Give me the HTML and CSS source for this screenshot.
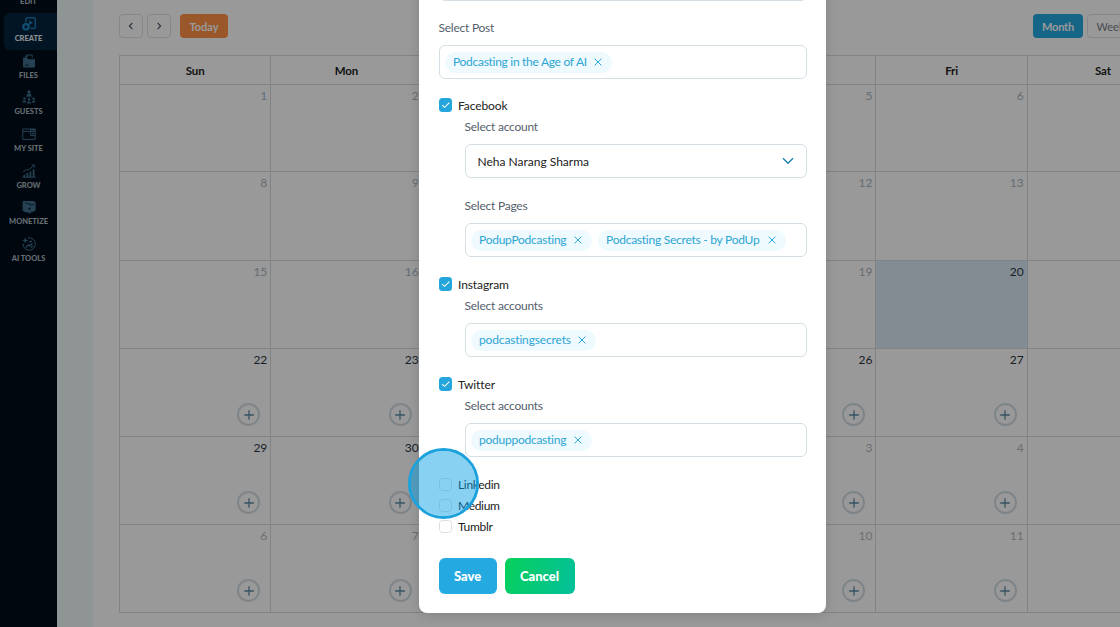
FILE: index.html
```html
<!DOCTYPE html>
<html lang="en">
<head>
  <meta charset="UTF-8">
  <meta name="viewport" content="width=device-width, initial-scale=1.0">
  <title>Create Post</title>
  <link rel="stylesheet" href="styles.css">
</head>
<body>
  <div class="app">
    <nav class="sidebar">
      <a class="nav-item">
        <svg viewBox="0 0 14 14"></svg>
        <span>EDIT</span>
      </a>
      <a class="nav-item active">
        <svg viewBox="0 0 14 14" fill="none" stroke="currentColor" stroke-width="1.2">
          <path d="M4 5.5V1.6Q4 .8 4.8.8H12.4Q13.2.8 13.2 1.6V10.6Q13.2 11.4 12.4 11.4H8.6"/>
          <path d="M7.2 3.6L10.8 5.8L7.2 8Z" fill="currentColor" stroke="none"/>
          <circle cx="4" cy="9.8" r="3.8" fill="currentColor" stroke="none"/>
          <path d="M4 7.8V11.8M2 9.8H6" stroke="#03243f"/>
        </svg>
        <span>CREATE</span>
      </a>
      <a class="nav-item">
        <svg viewBox="0 0 14 14" fill="currentColor">
          <path d="M3 4.4V2.6L5 .6H10.6V4.4H9.8V1.4H5.6V3.2H3.8V4.4Z"/>
          <path d="M1 3.8H5L6.4 5.2H13V12.4Q13 13.4 12 13.4H2Q1 13.4 1 12.4Z"/>
          <path d="M3 11.2H6.4" stroke="#000d18" stroke-width=".9"/>
        </svg>
        <span>FILES</span>
      </a>
      <a class="nav-item">
        <svg viewBox="0 0 14 14" fill="currentColor">
          <circle cx="7" cy="1.8" r="1.6"/>
          <path d="M4.8 6.4V4.8Q4.8 3.6 7 3.6Q9.2 3.6 9.2 4.8V6.4Z"/>
          <circle cx="2.4" cy="8.8" r="1.2"/>
          <circle cx="11.6" cy="8.8" r="1.2"/>
          <circle cx="7" cy="9.6" r="1.3"/>
          <path d="M.4 12.4Q.4 10.4 2.4 10.4T4.4 12.4ZM9.6 12.4Q9.6 10.4 11.6 10.4T13.6 12.4ZM4.8 13.6Q4.8 11.4 7 11.4T9.2 13.6Z"/>
          <path d="M7 6V8.6M3.4 7.6L5 6.4M10.6 7.6L9 6.4" stroke="currentColor" stroke-width=".7"/>
        </svg>
        <span>GUESTS</span>
      </a>
      <a class="nav-item">
        <svg viewBox="0 0 14 14" fill="none" stroke="currentColor" stroke-width="1">
          <path d="M.8 2H13.2V12.4H.8ZM.8 4.6H13.2M8.4 2V4.6M8.6 4.6V8.6H13.2"/>
          <path d="M9 2.8H13M9.8 6.6H12.4" stroke-width="1.4"/>
        </svg>
        <span>MY SITE</span>
      </a>
      <a class="nav-item">
        <svg viewBox="0 0 14 14" fill="none" stroke="currentColor" stroke-width="1">
          <path d="M.4 13.2H13.6M1 7.6L4.6 5.6L6.8 5.8L12 1.4M9.6 1H12.4V3.6"/>
          <path d="M2.4 13V10.8M5.4 13V9M8.4 13V7.6M11.6 13V5.4" stroke-width="1.8"/>
        </svg>
        <span>GROW</span>
      </a>
      <a class="nav-item">
        <svg viewBox="0 0 14 14" fill="currentColor">
          <path d="M.6 2.2Q.6 1 1.8 1H12.4V2.8H13.4V10.6L9.4 12.6V4.8L4 2.6L8.8 5.2V13.4L1.6 11.4Q.6 11 .6 10Z"/>
          <path d="M4 2.2H13.4V10.6L8.8 12V5.2Z"/>
          <circle cx="7.2" cy="8.6" r=".9" fill="#000d18"/>
          <path d="M3.4 2.8L9.2 4.8H12" fill="none" stroke="#000d18" stroke-width=".7"/>
        </svg>
        <span>MONETIZE</span>
      </a>
      <a class="nav-item">
        <svg viewBox="0 0 14 14" fill="none" stroke="currentColor" stroke-width="1">
          <path d="M6 .9A6.2 6.2 0 1 1 1 6.6"/>
          <path d="M3.2 .4L4 2.6L6.2 3.4L4 4.2L3.2 6.4L2.4 4.2L.2 3.4L2.4 2.6Z" fill="currentColor" stroke="none"/>
          <path d="M3.8 10.6L6.6 7.6L8 9L10.4 6.4M7.4 5.2L10 4.2M9 10.6L11 9" stroke-width="1.3"/>
        </svg>
        <span>AI TOOLS</span>
      </a>
    </nav>
    <div class="strip"></div>

    <main class="main">
      <div class="toolbar">
        <button class="btn-icon"><svg viewBox="0 0 10 10"><path d="M6.4 1.8L3.4 5L6.4 8.2"/></svg></button>
        <button class="btn-icon"><svg viewBox="0 0 10 10"><path d="M3.6 1.8L6.6 5L3.6 8.2"/></svg></button>
        <button class="btn-today">Today</button>
        <div class="views">
          <button class="btn-view selected">Month</button>
          <button class="btn-view">Week</button>
          <button class="btn-view">Day</button>
        </div>
      </div>
      <div class="calendar" id="calendar"></div>
    </main>
  </div>

  <div class="overlay">
    <div class="modal">
      <div class="field"></div>

      <label class="label">Select Post</label>
      <div class="field">
        <span class="tag t-post">Podcasting in the Age of AI <svg viewBox="0 0 8 8"><path d="M.6.6L7.4 7.4M7.4.6L.6 7.4"/></svg></span>
      </div>

      <div class="check-row first">
        <span class="checkbox checked"><svg viewBox="0 0 13 13"><path d="M3 6.8L5.4 9L10 4.4"/></svg></span>
        <span>Facebook</span>
      </div>
      <div class="sub">
        <label class="label">Select account</label>
        <div class="field select">
          <span>Neha Narang Sharma</span>
          <svg viewBox="0 0 12 8"><path d="M1 1.2L6 6.2L11 1.2"/></svg>
        </div>
        <label class="label pages">Select Pages</label>
        <div class="field">
          <span class="tag t-page">PodupPodcasting <svg viewBox="0 0 8 8"><path d="M.6.6L7.4 7.4M7.4.6L.6 7.4"/></svg></span>
          <span class="tag t-secrets">Podcasting Secrets - by PodUp <svg viewBox="0 0 8 8"><path d="M.6.6L7.4 7.4M7.4.6L.6 7.4"/></svg></span>
        </div>
      </div>

      <div class="check-row">
        <span class="checkbox checked"><svg viewBox="0 0 13 13"><path d="M3 6.8L5.4 9L10 4.4"/></svg></span>
        <span>Instagram</span>
      </div>
      <div class="sub">
        <label class="label">Select accounts</label>
        <div class="field">
          <span class="tag t-insta">podcastingsecrets <svg viewBox="0 0 8 8"><path d="M.6.6L7.4 7.4M7.4.6L.6 7.4"/></svg></span>
        </div>
      </div>

      <div class="check-row">
        <span class="checkbox checked"><svg viewBox="0 0 13 13"><path d="M3 6.8L5.4 9L10 4.4"/></svg></span>
        <span>Twitter</span>
      </div>
      <div class="sub">
        <label class="label">Select accounts</label>
        <div class="field">
          <span class="tag t-page">poduppodcasting <svg viewBox="0 0 8 8"><path d="M.6.6L7.4 7.4M7.4.6L.6 7.4"/></svg></span>
        </div>
      </div>

      <div class="more">
        <div class="check-row"><span class="checkbox"></span><span>Linkedin</span></div>
        <div class="check-row"><span class="checkbox"></span><span>Medium</span></div>
        <div class="check-row"><span class="checkbox"></span><span>Tumblr</span></div>
      </div>

      <div class="actions">
        <button class="btn-save">Save</button>
        <button class="btn-cancel">Cancel</button>
      </div>
    </div>
  </div>

  <div class="click-marker"></div>

  <script>
    const calendar = document.getElementById('calendar');
    const today = 20;
    let html = '';

    ['Sun', 'Mon', 'Tue', 'Wed', 'Thu', 'Fri', 'Sat'].forEach(day => {
      html += `<div class="day-name">${day}</div>`;
    });

    // 6 weeks, the month has 30 days
    for (let i = 1; i <= 42; i++) {
      const date = i > 30 ? i - 30 : i;
      let cls = 'day';
      if (i < today) cls += ' past';
      if (i > 30) cls += ' next';
      if (i === today) cls += ' today';
      const add = i > 21 ? '<span class="add"><svg viewBox="0 0 10 10"><path d="M5 .2V9.8M.2 5H9.8"/></svg></span>' : '';
      html += `<div class="${cls}"><span>${date}</span>${add}</div>`;
    }
    calendar.innerHTML = html;
  </script>
</body>
</html>
```
FILE: styles.css
```css
* {
  box-sizing: border-box;
}

body {
  margin: 0;
  height: 627px;
  overflow: hidden;
  font-family: Lato, "Liberation Sans", sans-serif;
  font-size: 12px;
  color: #222;
  background-color: #fff;
}

button {
  font-family: inherit;
  padding: 0;
  border: none;
}

.app {
  display: flex;
  height: 627px;
  overflow: hidden;
}

/* Sidebar */
.sidebar {
  flex: none;
  width: 57px;
  height: 627px;
  padding-left: 4px;
  background-color: #000d18;
  overflow: hidden;
}

.nav-item {
  display: flex;
  flex-direction: column;
  align-items: center;
  height: 36.7px;
  padding: 4px 4px 0 0;
  border-radius: 6px 0 0 6px;
  color: #3f6d8c;
}

.nav-item:first-child {
  margin-top: -23.7px;
}

.nav-item svg {
  flex: none;
  width: 14px;
  height: 14px;
}

.nav-item span {
  margin-top: 3px;
  font-size: 7.5px;
  line-height: 10px;
  font-weight: 900;
  white-space: nowrap;
  color: #a9b6bf;
}

.nav-item.active {
  background-color: #03243f;
  color: #1c86c4;
}

.nav-item.active span {
  color: #e4edf2;
}

.strip {
  flex: none;
  width: 36px;
  background-color: #eff8f9;
}

/* Calendar */
.main {
  flex: none;
  width: 1087px;
  padding: 14px 0 0 26px;
}

.toolbar {
  display: flex;
  height: 24px;
  margin-bottom: 17px;
}

.btn-icon {
  display: flex;
  align-items: center;
  justify-content: center;
  width: 24px;
  margin-right: 4px;
  border: 1px solid #dde3ea;
  border-radius: 4px;
  background-color: #fff;
}

.btn-icon svg {
  width: 10px;
  height: 10px;
  fill: none;
  stroke: #4d5a68;
  stroke-width: 1.2;
}

.btn-today {
  width: 48px;
  margin-left: 5px;
  border-radius: 4px;
  background-color: #ff9147;
  color: #fff;
  font-size: 11px;
  font-weight: bold;
}

.views {
  display: flex;
  gap: 4px;
  margin-left: auto;
}

.btn-view {
  width: 47px;
  border: 1px solid #dde3ea;
  border-radius: 4px;
  background-color: #fff;
  color: #77808c;
  font-size: 11px;
}

.btn-view.selected {
  width: 50px;
  border: none;
  background-color: #24a9e1;
  color: #fff;
  font-weight: bold;
  letter-spacing: -0.2px;
}

.btn-view:last-child {
  width: 42px;
}

.calendar {
  display: grid;
  grid-template-columns: repeat(7, 151.3px);
  grid-template-rows: 29px 87px 89px 88px 88px 88px 88px;
  width: 1061px;
  border-left: 1px solid #d8dbde;
  border-top: 1px solid #d8dbde;
}

.day-name,
.day {
  border-right: 1px solid #d8dbde;
  border-bottom: 1px solid #d8dbde;
}

.day-name {
  font-size: 11.5px;
  font-weight: bold;
  line-height: 29px;
  letter-spacing: -0.1px;
  text-align: center;
}

.day {
  display: flex;
  flex-direction: column;
  align-items: flex-end;
  justify-content: space-between;
  padding: 3px 3px 10px 0;
  line-height: 16px;
  color: #2c3644;
}

.day.past {
  color: #a9b6c2;
}

.day.next {
  color: #b5b9bd;
}

.day.today {
  background-color: #d9e9f4;
}

.add {
  display: flex;
  align-items: center;
  justify-content: center;
  width: 23px;
  height: 23px;
  margin-right: 7px;
  border: 2px solid #d3dce3;
  border-radius: 50%;
}

.add svg {
  width: 10px;
  height: 10px;
  stroke: #5c8aa6;
  stroke-width: 1.3;
}

/* Modal */
.overlay {
  position: absolute;
  inset: 0;
  overflow: hidden;
  background-color: rgba(0, 0, 0, 0.4);
}

.modal {
  width: 407px;
  margin: -33px 0 0 419px;
  padding: 0 19.5px 19px;
  border-radius: 0 0 8px 8px;
  background-color: #fff;
  box-shadow: 0 2px 12px rgba(0, 0, 0, 0.15);
}

.label {
  display: block;
  line-height: 18px;
  margin: 18px 0 8px;
  letter-spacing: -0.24px;
  color: #55606b;
}

.field {
  display: flex;
  align-items: center;
  gap: 6px;
  height: 34px;
  padding: 0 5.5px;
  border: 1px solid #d5dfe4;
  border-radius: 6px;
}

.tag {
  display: flex;
  align-items: center;
  justify-content: space-between;
  height: 21px;
  padding: 0 10px 1px 8px;
  border-radius: 11px;
  background-color: #effaff;
  color: #2ca5d2;
  letter-spacing: -0.25px;
  white-space: nowrap;
}

.tag svg {
  flex: none;
  width: 8px;
  height: 8px;
  stroke: #2ca5d2;
  stroke-width: 1;
}

.t-post {
  width: 167px;
  letter-spacing: -0.29px;
}

.t-page {
  width: 121px;
}

.t-secrets {
  width: 188px;
}

.t-insta {
  width: 125px;
  letter-spacing: -0.15px;
}

.check-row {
  display: flex;
  align-items: center;
  gap: 6px;
  height: 22px;
  margin-top: 16px;
  letter-spacing: -0.1px;
}

.check-row.first {
  margin-top: 15px;
}

.checkbox {
  width: 13.5px;
  height: 13.5px;
  border: 1px solid #d9e0e4;
  border-radius: 3.5px;
}

.checkbox.checked {
  border: none;
  background-color: #24a5dc;
}

.checkbox svg {
  display: block;
  width: 13.5px;
  height: 13.5px;
  fill: none;
  stroke: #fff;
  stroke-width: 1;
}

.sub {
  margin-left: 26px;
}

.sub .label {
  margin-top: 2px;
}

.sub .label.pages {
  margin-top: 19px;
}

.field.select {
  justify-content: space-between;
  padding: 0 12px;
}

.select svg {
  width: 12px;
  height: 8px;
  fill: none;
  stroke: #2183ad;
  stroke-width: 1.5;
}

.more {
  margin-top: 17px;
}

.more .check-row {
  height: 21px;
  margin-top: 0;
  letter-spacing: -0.3px;
}

.actions {
  display: flex;
  gap: 8px;
  margin-top: 21px;
}

.actions button {
  height: 36px;
  padding-bottom: 1px;
  border-radius: 6px;
  color: #fff;
  font-size: 13px;
  font-weight: 900;
}

.btn-save {
  width: 58px;
  background-color: #25a9e1;
}

.btn-cancel {
  width: 70px;
  background: linear-gradient(110deg, #08d15a, #03bf9c);
}

.click-marker {
  position: absolute;
  left: 407.5px;
  top: 447.5px;
  width: 71px;
  height: 71px;
  border: 3px solid #1ba1dc;
  border-radius: 50%;
  background: rgba(2, 157, 230, 0.47);
  background-clip: padding-box;
}
```
